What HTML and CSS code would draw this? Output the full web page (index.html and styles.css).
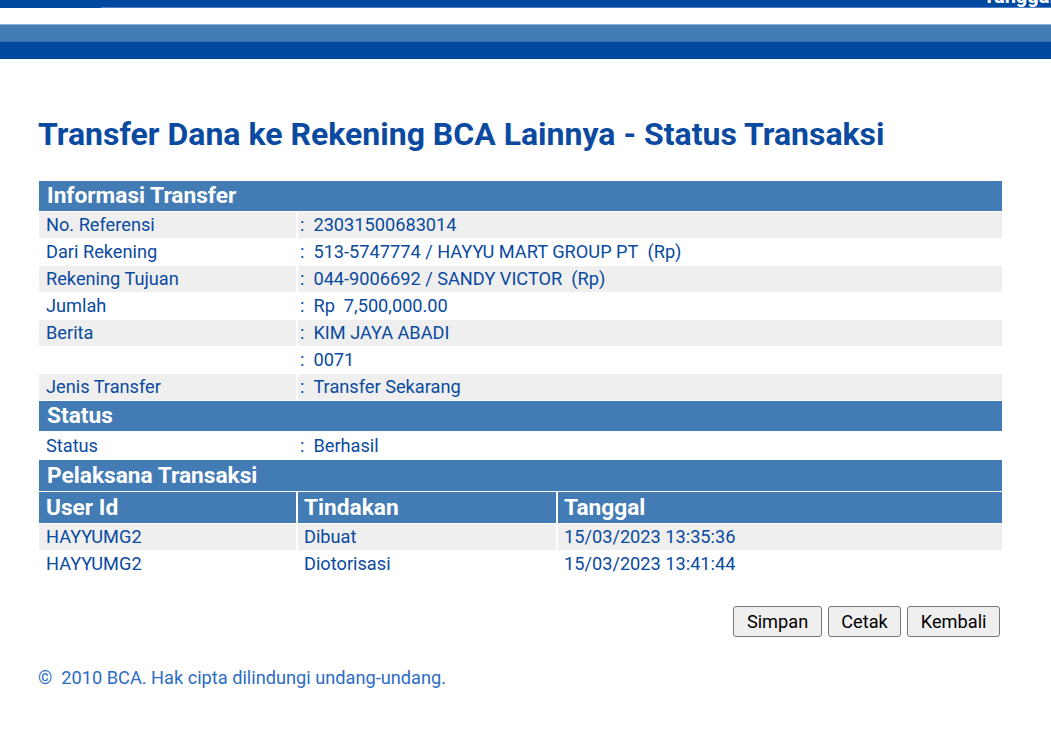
FILE: index.html
```html
<!DOCTYPE html>
<html lang="id">
<head>
<meta charset="utf-8">
<title>Transfer Dana ke Rekening BCA Lainnya - Status Transaksi</title>
<link rel="stylesheet" href="styles.css">
</head>
<body>
<div class="topbar">
  <div class="topbar-left"></div>
  <div class="topbar-right"><span class="topbar-text">Tanggal : 15/03/2023</span></div>
</div>
<div class="band-light"></div>
<div class="band-dark"></div>

<main class="content">
  <h1 class="title">Transfer Dana ke Rekening BCA Lainnya - Status Transaksi</h1>

  <table class="info">
    <colgroup>
      <col class="c1"><col class="c2"><col class="c3">
    </colgroup>
    <tr><th class="section" colspan="3">Informasi Transfer</th></tr>
    <tr class="odd"><td class="label">No. Referensi</td><td class="value" colspan="2">:&nbsp;&nbsp;23031500683014</td></tr>
    <tr><td class="label">Dari Rekening</td><td class="value" colspan="2">:&nbsp;&nbsp;513-5747774 / HAYYU MART GROUP PT&nbsp;&nbsp;(Rp)</td></tr>
    <tr class="odd"><td class="label">Rekening Tujuan</td><td class="value" colspan="2">:&nbsp;&nbsp;044-9006692 / SANDY VICTOR&nbsp;&nbsp;(Rp)</td></tr>
    <tr><td class="label">Jumlah</td><td class="value" colspan="2">:&nbsp;&nbsp;Rp&nbsp;&nbsp;7,500,000.00</td></tr>
    <tr class="odd"><td class="label">Berita</td><td class="value" colspan="2">:&nbsp;&nbsp;KIM JAYA ABADI</td></tr>
    <tr><td class="label"></td><td class="value" colspan="2">:&nbsp;&nbsp;0071</td></tr>
    <tr class="odd"><td class="label">Jenis Transfer</td><td class="value" colspan="2">:&nbsp;&nbsp;Transfer Sekarang</td></tr>
    <tr><th class="section" colspan="3">Status</th></tr>
    <tr class="tall"><td class="label">Status</td><td class="value" colspan="2">:&nbsp;&nbsp;Berhasil</td></tr>
    <tr><th class="section section-tall" colspan="3">Pelaksana Transaksi</th></tr>
    <tr><th class="colhead">User Id</th><th class="colhead">Tindakan</th><th class="colhead">Tanggal</th></tr>
    <tr class="odd"><td class="label">HAYYUMG2</td><td class="cell">Dibuat</td><td class="cell">15/03/2023 13:35:36</td></tr>
    <tr><td class="label">HAYYUMG2</td><td class="cell">Diotorisasi</td><td class="cell">15/03/2023 13:41:44</td></tr>
  </table>

  <div class="actions">
    <button class="btn" type="button">Simpan</button>
    <button class="btn" type="button">Cetak</button>
    <button class="btn" type="button">Kembali</button>
  </div>

  <p class="footer">&copy;&nbsp;&nbsp;2010 BCA. Hak cipta dilindungi undang-undang.</p>
</main>
</body>
</html>
```
FILE: styles.css
```css
html, body {
  margin: 0;
  padding: 0;
  background: #ffffff;
  font-family: Roboto, "Liberation Sans", Arial, sans-serif;
}

.topbar {
  display: flex;
  height: 8px;
  overflow: hidden;
}
.topbar-left {
  width: 101px;
  height: 8px;
  background: #0049a0;
}
.topbar-right {
  flex: 1;
  height: 7px;
  background: #0049a0;
  border-bottom: 1px solid #4f80bf;
  display: flex;
  align-items: flex-end;
  overflow: hidden;
  padding-left: 882px;
}
.topbar-text {
  color: #ffffff;
  font-weight: bold;
  font-size: 20px;
  line-height: 20px;
  white-space: nowrap;
  margin-bottom: 1px;
}

.band-light {
  margin-top: 16px;
  height: 16px;
  background: #447db6;
  border-top: 1px solid #8fb0d6;
  border-bottom: 1px solid #3a70ab;
}
.band-dark {
  height: 17px;
  background: #0049a0;
}

.content {
  padding: 0 0 0 37px;
  width: 967px;
}

.title {
  margin: 58px 0 0 1px;
  font-size: 32px;
  font-weight: bold;
  color: #0a4aa0;
  line-height: 35px;
}

.info {
  margin-top: 28px;
  width: 967px;
  border-collapse: separate;
  border-spacing: 2px 1px;
  table-layout: fixed;
  font-size: 18.2px;
  color: #0a4aa0;
}
.c1 { width: 257px; }
.c2 { width: 258px; }

.section,
.colhead {
  background: #437bb5;
  color: #ffffff;
  font-weight: bold;
  font-size: 22.7px;
  text-align: left;
  height: 30px;
  padding: 0 0 0 8px;
  line-height: 30px;
}
.section-tall,
.colhead {
  height: 31px;
  line-height: 31px;
}
.colhead { padding-left: 7px; }
.colhead + .colhead { padding-left: 6px; }

.info td {
  height: 26px;
  line-height: 26px;
  padding: 0;
  white-space: nowrap;
}
.info .tall td {
  height: 27px;
  line-height: 27px;
}
.odd td { background: #efefef; }
.label { padding-left: 7px !important; }
.value { padding-left: 2px !important; }
.cell { padding-left: 6px !important; }

.actions {
  display: flex;
  justify-content: flex-end;
  gap: 6px;
  margin: 28px 4px 0 0;
}
.btn {
  font-family: Roboto, "Liberation Sans", Arial, sans-serif;
  font-size: 18.2px;
  color: #000000;
  background: #efefef;
  border: 1px solid #767676;
  border-radius: 3px;
  height: 31px;
  padding: 0 12.5px;
}

.footer {
  margin: 28px 0 0 1px;
  font-size: 18.2px;
  color: #2b6cc4;
  line-height: 26px;
}
```
